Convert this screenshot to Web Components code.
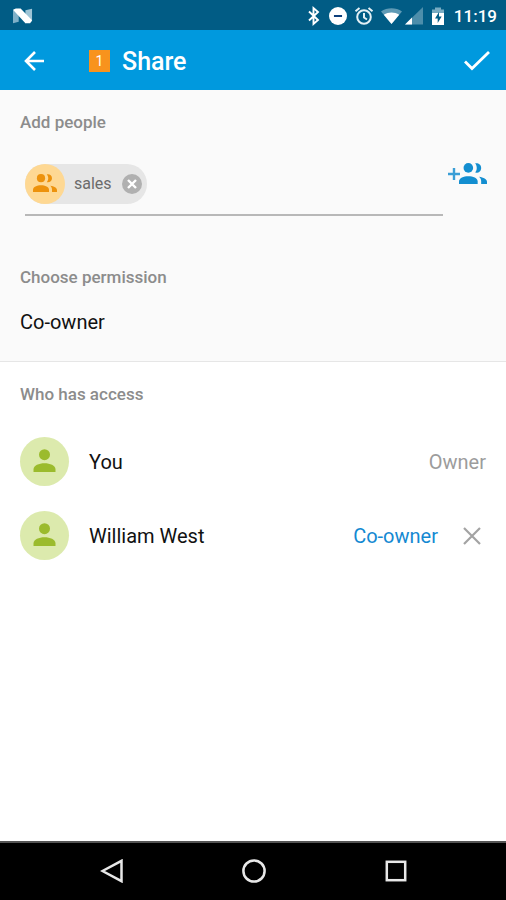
<!DOCTYPE html>
<html lang="en">
<head>
<meta charset="utf-8">
<meta name="viewport" content="width=device-width, initial-scale=1">
<title>Share</title>
<style>
  html, body { height: 100%; }
  body { margin: 0; font-family: Roboto, "Liberation Sans", sans-serif; background: #fff; color: #212121; }
</style>
</head>
<body>
<share-screen></share-screen>
<script>
const base = `
  *, *::before, *::after { box-sizing: border-box; }
  svg { display: block; flex: none; }
  button { font: inherit; color: inherit; background: none; border: 0; padding: 0; margin: 0; cursor: pointer; }
  h1, h2, ul { margin: 0; padding: 0; }
`;
const define = (name, html) => {
  const template = document.createElement('template');
  template.innerHTML = html;
  customElements.define(name, class extends HTMLElement {
    constructor() {
      super();
      this.attachShadow({ mode: 'open' }).append(template.content.cloneNode(true));
    }
  });
};

define('people-icon', `
  <style>${base} :host { display: block; width: 24px; } svg { width: 100%; }</style>
  <svg viewBox="0 0 24 18" fill="currentColor" aria-hidden="true">
    <circle cx="8" cy="4.200" r="4.100"/>
    <path d="M13.800.3C16.200-.3 19 1 19 4.200s-2.800 4.600-5.200 4c1.900-2.300 1.900-5.600 0-7.900z"/>
    <path d="M0 18v-2.200c0-3 4-4.500 8-4.500s8 1.500 8 4.500V18z"/>
    <path d="M17.200 11.800c3.800.6 6.800 2.100 6.800 4.200v2h-5v-2.200c0-1.600-.6-2.900-1.800-4z"/>
  </svg>`);

define('status-bar', `
  <style>${base}
    :host { display: flex; align-items: center; justify-content: space-between; height: 30px; padding: 2px 9px 0 13px; background: #015c85; color: #fff; }
    .icons { display: flex; align-items: center; gap: 7px; }
    .signal { display: flex; gap: 3px; }
    time { padding-left: 1px; font-size: 17px; line-height: 24px; font-weight: 500; }
  </style>
  <svg width="20" height="18" viewBox="0 0 21 18" aria-label="Android N" role="img">
    <path d="M0 3l6-1.500v13.500L0 16.500z" fill="#7fb0c8"/><path d="M13 3l7-1.500v13L13 16.500z" fill="#9dc4d6"/>
    <path d="M0 2.500L3 1h5L20 13.500l-2 3h-5z" fill="#fff"/>
  </svg>
  <div class="icons">
    <svg width="16" height="22" viewBox="0 0 16 22" fill="none" stroke="#fff" stroke-width="1.900" aria-hidden="true"><path d="M3 6.500l9 8.500-4.500 4V3L12 7l-9 8.500"/></svg>
    <svg width="18" height="18" viewBox="0 0 20 20" aria-hidden="true"><circle cx="10" cy="10" r="10" fill="#fff"/><path d="M5.500 10h9" stroke="#0d3f7c" stroke-width="2.200"/></svg>
    <svg width="20" height="20" viewBox="0 0 20 20" fill="none" stroke="#e4f0f5" stroke-width="2" aria-hidden="true"><circle cx="10" cy="11" r="6.800"/><path d="M10 7v4.500l3 2M1.500 5.300L5.500 2M18.500 5.300L14.500 2"/></svg>
    <span class="signal">
      <svg width="21" height="18" viewBox="0 0 21 18" aria-hidden="true"><path d="M10.500 17L0 4.500C6 .2 15 .2 21 4.500z" fill="#5f9ab5"/><path d="M10.500 17L2.800 7.800c4.500-3 10.900-3 15.400 0z" fill="#fff"/></svg>
      <svg width="18" height="18" viewBox="0 0 18 18" aria-hidden="true"><path d="M0 17.500L18 0v17.500z" fill="#4d8eab"/><path d="M0 17.500l7-7v7z" fill="#fff"/></svg>
    </span>
    <svg width="16" height="20" viewBox="2 0 16 20" aria-hidden="true"><path d="M4 3.500h3V1.500h6v2h3V8H4z" fill="#78abc2"/><path d="M4 7h12v12H4z" fill="#fff"/><path d="M11 6l-4 6.500h2.700V17l4-6.500H11z" fill="#015c85"/></svg>
    <time>11:19</time>
  </div>`);

define('app-bar', `
  <style>${base}
    :host { display: flex; align-items: center; height: 60px; padding: 2px 14px 0 22px; background: #0099de; color: #fff; }
    button { display: grid; place-items: center; }
    .badge { display: grid; place-items: center; width: 21px; height: 22px; margin: 0 12px 0 43px; background: #f8931d; font-size: 14px; line-height: 22px; }
    h1 { flex: 1; padding-top: 2px; font-size: 25px; line-height: 32px; font-weight: 500; }
  </style>
  <button aria-label="Back"><svg width="24" height="24" viewBox="0 0 24 24" fill="none" stroke="#fff" stroke-width="2.600"><path d="M22 12H4M13 3L4 12l9 9"/></svg></button>
  <span class="badge">1</span>
  <h1><slot></slot></h1>
  <button aria-label="Done"><svg width="30" height="24" viewBox="0 0 30 24" fill="none" stroke="#fff" stroke-width="2.800"><path d="M3 12.500l7 7L27 3"/></svg></button>`);

define('person-chip', `
  <style>${base}
    :host { display: flex; align-items: center; height: 40px; padding-right: 5px; border-radius: 20px; background: #e6e6e6; color: #6b6b6b; font-size: 16px; line-height: 24px; }
    .pic { display: grid; place-items: center; width: 40px; height: 40px; margin-right: 9px; padding-bottom: 2px; border-radius: 50%; background: #fed893; color: #ed920c; }
    button { margin-left: 10px; }
  </style>
  <span class="pic"><people-icon></people-icon></span>
  <slot></slot>
  <button aria-label="Remove"><svg width="20" height="20" viewBox="0 0 20 20"><circle cx="10" cy="10" r="10" fill="#b0b0b0"/><path d="M6 6l8 8M14 6l-8 8" stroke="#fff" stroke-width="2.400"/></svg></button>`);

define('section-label', `
  <style>${base}
    :host { display: block; color: #8c8c8c; }
    h2 { font-size: 17px; line-height: 24px; font-weight: 500; }
  </style>
  <h2><slot></slot></h2>`);

define('share-form', `
  <style>${base}
    :host { display: block; padding: 20px 20px 26px; background: #fafafa; border-bottom: 1px solid #e6e6e6; }
    .people { display: flex; align-items: flex-start; margin: 30px 0 49px 5px; }
    .field { flex: 1; min-width: 0; display: flex; padding-bottom: 10px; border-bottom: 2px solid #b8b8b8; }
    input { flex: 1; min-width: 0; border: 0; padding: 0 8px; outline: 0; background: none; font: inherit; font-size: 16px; }
    .add { display: flex; align-items: center; margin: -1px -1px 0 5px; color: #138ed0; }
    .add svg { margin-right: -1px; }
    people-icon { width: 28px; }
    select { display: block; appearance: none; border: 0; padding: 0; margin-top: 20px; background: none; color: #111; font: inherit; font-size: 20px; line-height: 26px; }
  </style>
  <section-label>Add people</section-label>
  <div class="people">
    <div class="field"><person-chip>sales</person-chip><input type="text" aria-label="Add people"></div>
    <button class="add" aria-label="Add from contacts">
      <svg width="12" height="12" viewBox="0 0 12 12" stroke="#3a9ed6" stroke-width="2.400"><path d="M6 0v12M0 6h12"/></svg>
      <people-icon></people-icon>
    </button>
  </div>
  <section-label>Choose permission</section-label>
  <select aria-label="Choose permission"><option>Co-owner</option></select>`);

define('access-row', `
  <style>${base}
    :host { display: flex; align-items: center; gap: 20px; font-size: 20px; line-height: 26px; color: #111; }
    .avatar { display: grid; place-items: center; width: 49px; height: 49px; padding-bottom: 2px; border-radius: 50%; background: #dceaad; }
    .name { flex: 1; min-width: 0; }
  </style>
  <span class="avatar"><svg width="23" height="23" viewBox="0 0 23 23" fill="#9bbb2d" aria-hidden="true"><circle cx="11.500" cy="5.700" r="5.500"/><path d="M.5 23v-2.500c0-4 5.500-6.200 11-6.200s11 2.200 11 6.200V23z"/></svg></span>
  <span class="name"><slot></slot></span>
  <slot name="role"></slot>`);

define('role-control', `
  <style>${base}
    :host { display: flex; align-items: center; gap: 24px; margin-right: 4px; color: #1489d2; }
  </style>
  <button><slot></slot></button>
  <button aria-label="Remove access"><svg width="20" height="20" viewBox="0 0 20 20" stroke="#a3a3a3" stroke-width="2.200"><path d="M2 2l16 16M18 2L2 18"/></svg></button>`);

define('access-list', `
  <style>${base}
    :host { display: block; flex: 1; padding: 20px; }
    ul { display: grid; gap: 25px; margin-top: 31px; list-style: none; }
    .owner { color: #9c9c9c; }
  </style>
  <section-label>Who has access</section-label>
  <ul>
    <li><access-row>You<span slot="role" class="owner">Owner</span></access-row></li>
    <li><access-row>William West<role-control slot="role">Co-owner</role-control></access-row></li>
  </ul>`);

define('nav-bar', `
  <style>${base}
    :host { display: flex; align-items: center; justify-content: center; height: 59px; padding: 0 0 2px 2px; border-top: 2px solid #555; background: #000; }
    nav { display: flex; justify-content: space-between; width: 61%; }
    svg { fill: none; stroke: #e8e8e8; stroke-width: 2.500; }
  </style>
  <nav aria-label="System">
    <button aria-label="Back"><svg width="24" height="24" viewBox="0 0 24 24"><path d="M21.500 1.800v20.400L2.500 12z"/></svg></button>
    <button aria-label="Home"><svg width="24" height="24" viewBox="0 0 24 24"><circle cx="12" cy="12" r="10.600"/></svg></button>
    <button aria-label="Recent apps"><svg width="24" height="24" viewBox="0 0 24 24"><rect x="2.800" y="2.800" width="18.400" height="18.400"/></svg></button>
  </nav>`);

define('share-screen', `
  <style>${base}
    :host { display: flex; flex-direction: column; min-height: 100%; background: #fff; }
  </style>
  <status-bar></status-bar>
  <app-bar>Share</app-bar>
  <share-form></share-form>
  <access-list></access-list>
  <nav-bar></nav-bar>`);
</script>
</body>
</html>
